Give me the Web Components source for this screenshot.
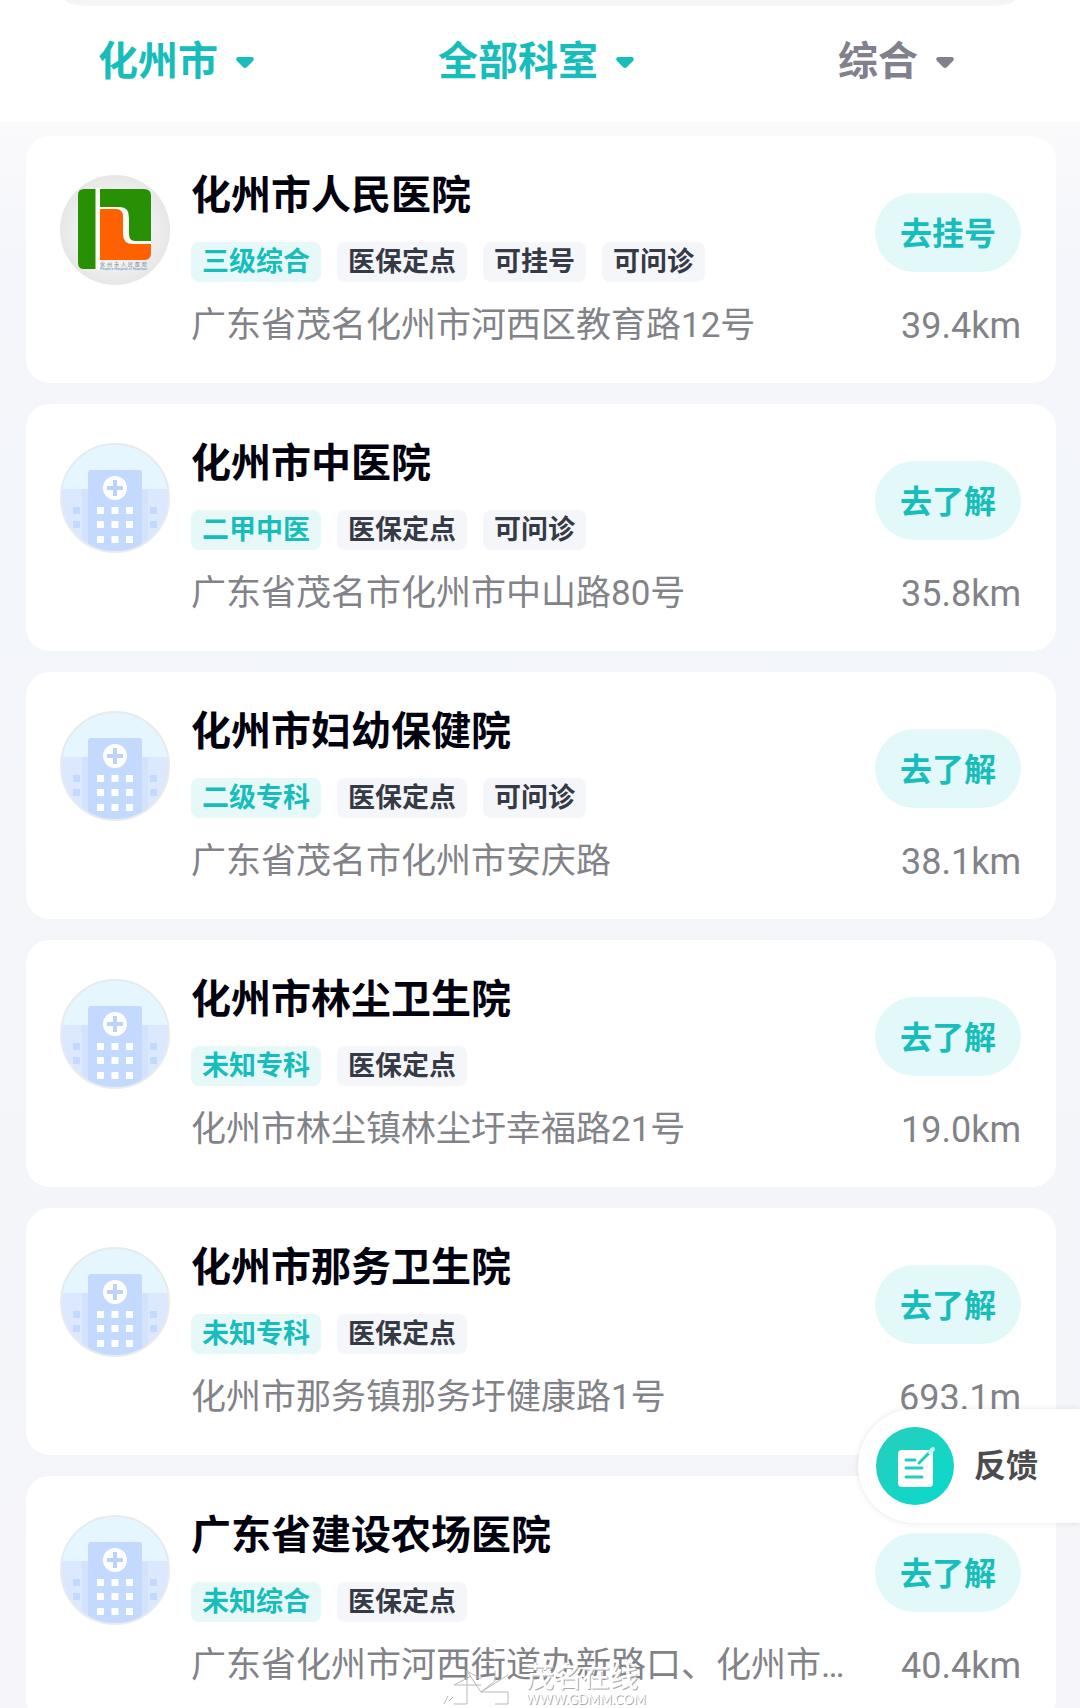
<!DOCTYPE html>
<html lang="zh-CN">
<head>
<meta charset="utf-8">
<meta name="viewport" content="width=device-width, initial-scale=1">
<title>找医院</title>
<style>
  body {margin: 0;font-family: Roboto, "Noto Sans CJK SC", sans-serif;}
</style>
</head>
<body>
<hospital-app>
  <filter-bar slot="header">
    <filter-select label="地区" value="化州市" active></filter-select>
    <filter-select label="科室" value="全部科室" active></filter-select>
    <filter-select label="排序" value="综合"></filter-select>
  </filter-bar>

  <hospital-card name="化州市人民医院" level="三级综合" address="广东省茂名化州市河西区教育路12号" distance="39.4km" action="去挂号">
    <logo-renmin slot="avatar"></logo-renmin>
    <hospital-tag>医保定点</hospital-tag>
    <hospital-tag>可挂号</hospital-tag>
    <hospital-tag>可问诊</hospital-tag>
  </hospital-card>
  <hospital-card name="化州市中医院" level="二甲中医" address="广东省茂名市化州市中山路80号" distance="35.8km" action="去了解">
    <hospital-tag>医保定点</hospital-tag>
    <hospital-tag>可问诊</hospital-tag>
  </hospital-card>
  <hospital-card name="化州市妇幼保健院" level="二级专科" address="广东省茂名市化州市安庆路" distance="38.1km" action="去了解">
    <hospital-tag>医保定点</hospital-tag>
    <hospital-tag>可问诊</hospital-tag>
  </hospital-card>
  <hospital-card name="化州市林尘卫生院" level="未知专科" address="化州市林尘镇林尘圩幸福路21号" distance="19.0km" action="去了解">
    <hospital-tag>医保定点</hospital-tag>
  </hospital-card>
  <hospital-card name="化州市那务卫生院" level="未知专科" address="化州市那务镇那务圩健康路1号" distance="693.1m" action="去了解">
    <hospital-tag>医保定点</hospital-tag>
  </hospital-card>
  <hospital-card name="广东省建设农场医院" level="未知综合" address="广东省化州市河西街道办新路口、化州市建设农场" distance="40.4km" action="去了解">
    <hospital-tag>医保定点</hospital-tag>
  </hospital-card>

  <feedback-button slot="overlay">反馈</feedback-button>
  <site-watermark slot="overlay" name="茂名在线">WWW.GDMM.COM</site-watermark>
</hospital-app>

<script>
class HospitalApp extends HTMLElement {
  constructor() {
    super();
    this.attachShadow({ mode: 'open' }).innerHTML = `
      <style>
      :host {display: block;position: relative;height: 100vh;overflow: hidden;background: linear-gradient(#fafafb 122px, #f5f6fb 260px, #f3f6fa 500px, #f5f5fa);}
      .list {display: flex;flex-direction: column;gap: 21px;padding: 14px 24px 24px 26px;}
      </style>
      <slot name="header"></slot>
      <main class="list"><slot></slot></main>
      <slot name="overlay"></slot>
    `;
  }
}

class FilterBar extends HTMLElement {
  constructor() {
    super();
    this.attachShadow({ mode: 'open' }).innerHTML = `
      <style>
      :host {display: block;background: #fff;}
      .search {height: 6px;margin: 0 66px;background: #f5f5f5;border-radius: 0 0 24px 24px / 0 0 6px 6px;}
      .filters {display: grid;grid-template-columns: repeat(3, 1fr);height: 116px;}
      </style>
      <div class="search"></div>
      <nav class="filters"><slot></slot></nav>
    `;
  }
}

class FilterSelect extends HTMLElement {
  constructor() {
    super();
    this.attachShadow({ mode: 'open' }).innerHTML = `
      <style>
      :host {display: flex;align-items: center;justify-content: center;padding-bottom: 4px;color: #80818d;}
      :host([active]) {color: #16bdbb;}
      label {display: flex;align-items: center;gap: 18px;padding-right: 8px;}
      select {appearance: none;border: 0;margin: 0;padding: 0;background: none;color: inherit;font: 700 40px/56px Roboto, "Noto Sans CJK SC", sans-serif;outline: none;}
      svg {display: block;width: 18px;height: 11px;}
      </style>
      <label>
        <select aria-label="${this.getAttribute('label')}"><option>${this.getAttribute('value')}</option></select>
        <svg viewBox="0 0 18 11" aria-hidden="true"><path d="M2 0h14q3 1 1 4l-6 6q-2 2-4 0L1 4q-2-3 1-4z" fill="currentColor"/></svg>
      </label>
    `;
  }
}

class HospitalTag extends HTMLElement {
  constructor() {
    super();
    this.attachShadow({ mode: 'open' }).innerHTML = `
      <style>
      :host {display: block;padding: 0 11px;border-radius: 8px;background: #f5f6fa;color: #363a47;font-size: 27px;font-weight: 700;line-height: 40px;white-space: nowrap;}
      :host([level]) {background: #e6f9f8;color: #16bdbb;}
      </style>
      <slot></slot>
    `;
  }
}

// fallback picture for hospitals without a logo
class HospitalAvatar extends HTMLElement {
  constructor() {
    super();
    this.attachShadow({ mode: 'open' }).innerHTML = `
      <style>
      :host {display: block;}
      svg {display: block;width: 110px;height: 110px;}
      </style>
      <svg viewBox="0 0 110 110" aria-hidden="true">
        <clipPath id="round"><circle cx="55" cy="55" r="54"/></clipPath>
        <g clip-path="url(#round)">
          <path d="M0 0h110v110H0z" fill="#e6f6fe"/>
          <path d="M0 46h110v64H0z" fill="#dbe8fe"/>
          <path d="M22 46h66v64H22z" fill="#d3e2fd"/>
          <path d="M28 30q0-3 3-3h48q3 0 3 3v80H28z" fill="#c4d9fe"/>
          <circle cx="55" cy="45" r="12" fill="#fff"/>
          <path d="M55 37v16M47 45h16" stroke="#bcd2f8" stroke-width="4"/>
          <path d="M37 64h7v7h-7zM51.500 64h7v7h-7zM66 64h7v7h-7zM37 78h7v7h-7zM51.500 78h7v7h-7zM66 78h7v7h-7zM37 93h7v7h-7zM51.500 93h7v7h-7zM66 93h7v7h-7z" fill="#fff"/>
          <path d="M13 64h7v7h-7zM13 78h7v7h-7zM90 64h7v7h-7zM90 78h7v7h-7z" fill="#c4d9fe"/>
        </g>
        <circle cx="55" cy="55" r="54" fill="none" stroke="#e6ebee" stroke-width="2"/>
      </svg>
    `;
  }
}

class LogoRenmin extends HTMLElement {
  constructor() {
    super();
    this.attachShadow({ mode: 'open' }).innerHTML = `
      <style>
      :host {display: block;}
      svg {display: block;width: 110px;height: 110px;}
      </style>
      <svg viewBox="0 0 110 110" aria-hidden="true">
        <defs><radialGradient id="disc"><stop offset=".5" stop-color="#f4f4f4"/><stop offset="1" stop-color="#e7e7e7"/></radialGradient></defs>
        <circle cx="55" cy="55" r="55" fill="url(#disc)"/>
        <path d="M35 13h6v82h-6zM40 30h51v40H40z" fill="#fbfbf4"/>
        <path d="M24 14h11.500v80H24q-6 0-6-6V20q0-6 6-6z" fill="#289005"/>
        <path d="M40 14h44q7 0 7 7v45H75q-6 0-6-7V43q0-11-9-11H40z" fill="#289005"/>
        <path d="M40 34h16q7 0 7 8v17q0 10 10 10h18v9q0 7-7 7H40z" fill="#ff6000"/>
        <text x="40 47 54 61 68 75 82" y="91" font-size="5" fill="#6e8190">化州市人民医院</text>
        <text x="40" y="95" font-size="3.600" fill="#5b8fc0">People's Hospital of Huazhou</text>
      </svg>
    `;
  }
}

class HospitalCard extends HTMLElement {
  constructor() {
    super();
    this.attachShadow({ mode: 'open' }).innerHTML = `
      <style>
      :host {display: block;border-radius: 24px;background: #fff;}
      article {display: grid;grid-template-columns: 110px minmax(0, 1fr) auto;column-gap: 21px;padding: 34px 35px 33px 34px;}
      .avatar {padding-top: 5px;}
      .info {min-width: 0;}
      h2 {margin: 0;color: #02020f;font-size: 40px;font-weight: 700;line-height: 52px;}
      .tags {display: flex;gap: 16px;margin-top: 20px;}
      .address {margin: 20px 4px 0 0;color: #828388;font-size: 35px;font-weight: 400;line-height: 48px;white-space: nowrap;overflow: hidden;text-overflow: ellipsis;}
      .side {display: flex;flex-direction: column;align-items: flex-end;justify-content: space-between;padding-top: 23px;}
      button {width: 146px;height: 79px;border: 0;border-radius: 40px;padding: 3px 0 0;background: #e3f8f8;color: #16bdbb;font: 700 32px/40px Roboto, "Noto Sans CJK SC", sans-serif;cursor: pointer;}
      .distance {color: #828388;font-size: 36px;line-height: 48px;}
      </style>
      <article>
        <div class="avatar"><slot name="avatar"><hospital-avatar></hospital-avatar></slot></div>
        <div class="info">
          <h2>${this.getAttribute('name')}</h2>
          <div class="tags"><hospital-tag level>${this.getAttribute('level')}</hospital-tag><slot></slot></div>
          <p class="address">${this.getAttribute('address')}</p>
        </div>
        <div class="side">
          <button type="button">${this.getAttribute('action')}</button>
          <span class="distance">${this.getAttribute('distance')}</span>
        </div>
      </article>
    `;
  }
}

class FeedbackButton extends HTMLElement {
  constructor() {
    super();
    this.attachShadow({ mode: 'open' }).innerHTML = `
      <style>
      :host {position: absolute;right: 0;bottom: 185px;}
      button {display: flex;align-items: center;gap: 20px;border: 0;border-radius: 58px 0 0 58px;padding: 18px 42px 18px 18px;background: #fff;box-shadow: 0 0 6px rgba(0, 0, 0, .1);color: #4c4c4e;font: 700 32px/40px Roboto, "Noto Sans CJK SC", sans-serif;cursor: pointer;}
      svg {display: block;width: 78px;height: 78px;}
      </style>
      <button type="button">
        <svg viewBox="0 0 78 78" aria-hidden="true">
          <defs><linearGradient id="teal" x1="0" y1="0" x2="1" y2="1"><stop offset="0" stop-color="#28cdbb"/><stop offset="1" stop-color="#08dacd"/></linearGradient></defs>
          <circle cx="39" cy="39" r="39" fill="url(#teal)"/>
          <rect x="22" y="23" width="35" height="37" rx="4" fill="#fff"/>
          <path d="M30 33h9M30 41h16M30 50h16" stroke="#25cdbd" stroke-width="3" stroke-linecap="round"/>
          <path d="M43 36l14-14" stroke="#25cdbd" stroke-width="3" stroke-linecap="round"/>
          <path d="M54 25l3-3" stroke="#c9f5ef" stroke-width="4" stroke-linecap="round"/>
        </svg>
        <slot></slot>
      </button>
    `;
  }
}

class SiteWatermark extends HTMLElement {
  constructor() {
    super();
    this.attachShadow({ mode: 'open' }).innerHTML = `
      <style>
      :host {position: absolute;left: 442px;bottom: 2px;display: flex;align-items: flex-end;gap: 16px;color: #fff;pointer-events: none;text-shadow: 1px 1px 0 #aaa;}
      svg {display: block;width: 68px;height: 38px;}
      .name {display: block;font-size: 28px;font-weight: 500;line-height: 28px;}
      .site {display: block;font: 13px/14px Lato, sans-serif;}
      </style>
      <svg viewBox="0 0 68 38" fill="none" aria-hidden="true">
        <path d="M2 36l4-8M7 33l4-4M12 17l17-9M12 17l27 0M12 36h13V3l14 21L66 7M39 24l14-11M39 24l27 0v12H53M25 3l14 8M53 13V3" stroke="#b9b9b9"/>
      </svg>
      <span><span class="name">${this.getAttribute('name')}</span><span class="site"><slot></slot></span></span>
    `;
  }
}

customElements.define('hospital-app', HospitalApp);
customElements.define('filter-bar', FilterBar);
customElements.define('filter-select', FilterSelect);
customElements.define('hospital-tag', HospitalTag);
customElements.define('hospital-avatar', HospitalAvatar);
customElements.define('logo-renmin', LogoRenmin);
customElements.define('hospital-card', HospitalCard);
customElements.define('feedback-button', FeedbackButton);
customElements.define('site-watermark', SiteWatermark);
</script>
</body>
</html>
